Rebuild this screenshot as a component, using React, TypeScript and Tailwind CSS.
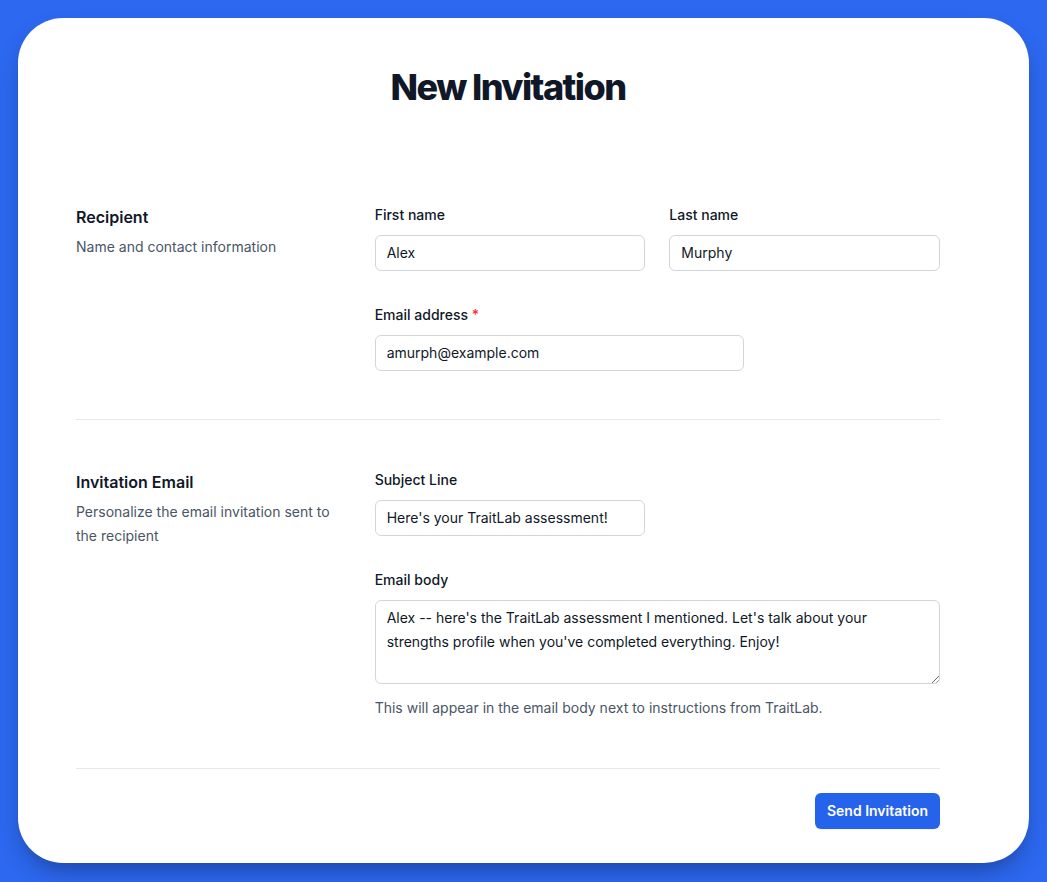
import React from 'react';

const inputClass =
    'block w-full rounded-md bg-white px-3 py-1.5 text-sm/6 text-gray-900 outline-1 -outline-offset-1 outline-gray-300';

const App: React.FC = () => {
    return (
        <div className="min-h-screen bg-[#2c68f0] p-[18px] font-['Inter',sans-serif]">
            <div className="rounded-[45px] bg-white pt-[49px] pb-[34px] pl-[58px] shadow-[0_12px_24px_-6px_rgba(0,0,0,0.35)]">
                <div className="w-[864px]">
                    {/* Titulo */}
                    <h1 className="mb-12 text-center text-4xl font-extrabold tracking-[-0.043em] text-gray-900">New Invitation</h1>

                    {/* Destinatario */}
                    <div className="grid grid-cols-3 gap-x-8 border-b border-gray-900/10 py-12">
                        <div>
                            <h2 className="text-base/7 font-semibold text-gray-900">Recipient</h2>
                            <p className="mt-1 text-sm/6 text-gray-600">Name and contact information</p>
                        </div>
                        <div className="col-span-2 grid grid-cols-6 gap-x-6 gap-y-8">
                            <div className="col-span-3">
                                <label className="block text-sm/6 font-medium text-gray-900">First name</label>
                                <div className="mt-2">
                                    <input type="text" defaultValue="Alex" className={inputClass} />
                                </div>
                            </div>
                            <div className="col-span-3">
                                <label className="block text-sm/6 font-medium text-gray-900">Last name</label>
                                <div className="mt-2">
                                    <input type="text" defaultValue="Murphy" className={inputClass} />
                                </div>
                            </div>
                            <div className="col-span-4">
                                <label className="block text-sm/6 font-medium text-gray-900">
                                    Email address <span className="text-red-500">*</span>
                                </label>
                                <div className="mt-2">
                                    <input type="email" defaultValue="amurph@example.com" className={inputClass} />
                                </div>
                            </div>
                        </div>
                    </div>

                    {/* Email de invitacion */}
                    <div className="grid grid-cols-3 gap-x-8 border-b border-gray-900/10 py-12">
                        <div>
                            <h2 className="text-base/7 font-semibold text-gray-900">Invitation Email</h2>
                            <p className="mt-1 text-sm/6 text-gray-600">Personalize the email invitation sent to the recipient</p>
                        </div>
                        <div className="col-span-2 grid grid-cols-6 gap-x-6 gap-y-8">
                            <div className="col-span-3">
                                <label className="block text-sm/6 font-medium text-gray-900">Subject Line</label>
                                <div className="mt-2">
                                    <input type="text" defaultValue="Here's your TraitLab assessment!" className={inputClass} />
                                </div>
                            </div>
                            <div className="col-span-6">
                                <label className="block text-sm/6 font-medium text-gray-900">Email body</label>
                                <div className="mt-2">
                                    <textarea
                                        rows={3}
                                        defaultValue="Alex -- here's the TraitLab assessment I mentioned. Let's talk about your strengths profile when you've completed everything. Enjoy!"
                                        className={inputClass}
                                    />
                                </div>
                                <p className="mt-3 text-sm/6 text-gray-600">This will appear in the email body next to instructions from TraitLab.</p>
                            </div>
                        </div>
                    </div>

                    <div className="mt-6 flex justify-end">
                        <button className="rounded-md bg-[#2563eb] px-3 py-2 text-sm font-semibold text-white shadow-xs">Send Invitation</button>
                    </div>
                </div>
            </div>
        </div>
    );
};

export default App;
